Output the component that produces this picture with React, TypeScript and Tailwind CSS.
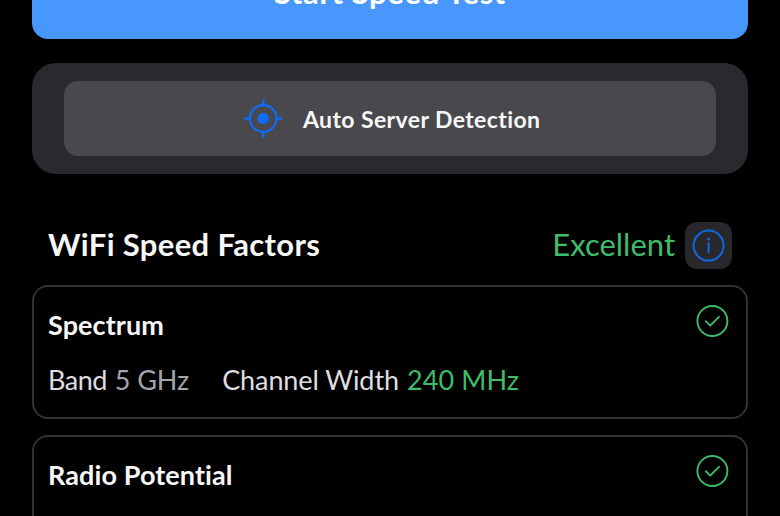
import React from 'react';

const TargetIcon: React.FC<{ className?: string }> = ({ className }) => (
    <svg viewBox="0 0 40 40" fill="none" stroke="currentColor" strokeWidth="2.2" strokeLinecap="round" className={className}>
        <circle cx="20.2" cy="19.5" r="13.3" />
        <circle cx="20.2" cy="19.5" r="5.7" fill="currentColor" stroke="none" />
        <path d="M20.2 1.5v5M20.2 32.5v5M2.2 19.5h5M33.2 19.5h5" strokeWidth="2.6" />
    </svg>
);

const InfoIcon: React.FC<{ className?: string }> = ({ className }) => (
    <svg viewBox="0 0 34 34" fill="none" stroke="currentColor" strokeWidth="2" strokeLinecap="round" className={className}>
        <circle cx="16.6" cy="16.6" r="15" />
        <path d="M16.6 14.3v9" strokeWidth="2.2" />
        <circle cx="16.6" cy="10" r="1.5" fill="currentColor" stroke="none" />
    </svg>
);

const CheckIcon: React.FC<{ className?: string }> = ({ className }) => (
    <svg viewBox="0 0 34 34" fill="none" stroke="currentColor" strokeWidth="1.9" strokeLinecap="round" strokeLinejoin="round" className={className}>
        <circle cx="17.4" cy="17" r="15" />
        <path d="M10.8 17.2l4.4 4.4 8.8-8.8" />
    </svg>
);

interface FactorCardProps {
    title: string;
    children?: React.ReactNode;
}

const FactorCard: React.FC<FactorCardProps> = ({ title, children }) => (
    <section className="h-[134px] shrink-0 rounded-2xl border-2 border-[#323235] pl-3.5 pr-[17px]">
        <div className="flex items-start justify-between">
            <h3 className="mt-[22px] text-[27px] leading-8 font-bold tracking-[0.1px]">{title}</h3>
            <CheckIcon className="mt-[17px] w-[34px] h-[34px] text-[#3fbc6b]" />
        </div>
        {children}
    </section>
);

export default function App() {
    return (
        <div className="h-[516px] overflow-hidden bg-black px-8 font-['Lato',sans-serif] text-[#f7f7f7]">
            <button className="flex h-[39px] w-full items-end justify-center rounded-b-2xl bg-[#4897ff] pb-[29px] text-[31px] leading-9 font-bold tracking-[0.6px] text-white whitespace-nowrap">
                Start Speed Test
            </button>

            <div className="mt-6 h-[111px] rounded-[24px] bg-[#292a2e] px-8 py-[18px]">
                <button className="flex h-[75px] w-full items-center rounded-[14px] bg-[#49494d] pl-[179px]">
                    <TargetIcon className="w-10 h-10 text-[#0c6cf5]" />
                    <span className="ml-5 text-[23px] leading-7 font-bold tracking-[0.4px] whitespace-nowrap">Auto Server Detection</span>
                </button>
            </div>

            <div className="mt-12 flex h-[47px] items-center justify-between px-4">
                <h2 className="pb-[3px] text-[31px] leading-9 font-bold tracking-[0.35px] whitespace-nowrap">WiFi Speed Factors</h2>
                <div className="flex items-center">
                    <span className="mr-2.5 pb-[3px] text-[31px] leading-9 text-[#3fbc6b]">Excellent</span>
                    <button className="flex h-[47px] w-[47px] items-center justify-center rounded-xl bg-[#28282c]">
                        <InfoIcon className="w-[34px] h-[34px] text-[#1067e0]" />
                    </button>
                </div>
            </div>

            <div className="mt-4 flex flex-col gap-4">
                <FactorCard title="Spectrum">
                    <p className="mt-[23px] flex text-[27px] leading-8 tracking-[-0.1px] text-[#dedee0] whitespace-nowrap">
                        <span className="tracking-[-0.5px]">Band</span>
                        <span className="ml-2 text-[#a3a3ab]">5 GHz</span>
                        <span className="ml-[33px]">Channel Width</span>
                        <span className="ml-2 tracking-[0.1px] text-[#3fbc6b]">240 MHz</span>
                    </p>
                </FactorCard>
                <FactorCard title="Radio Potential" />
            </div>
        </div>
    );
}
